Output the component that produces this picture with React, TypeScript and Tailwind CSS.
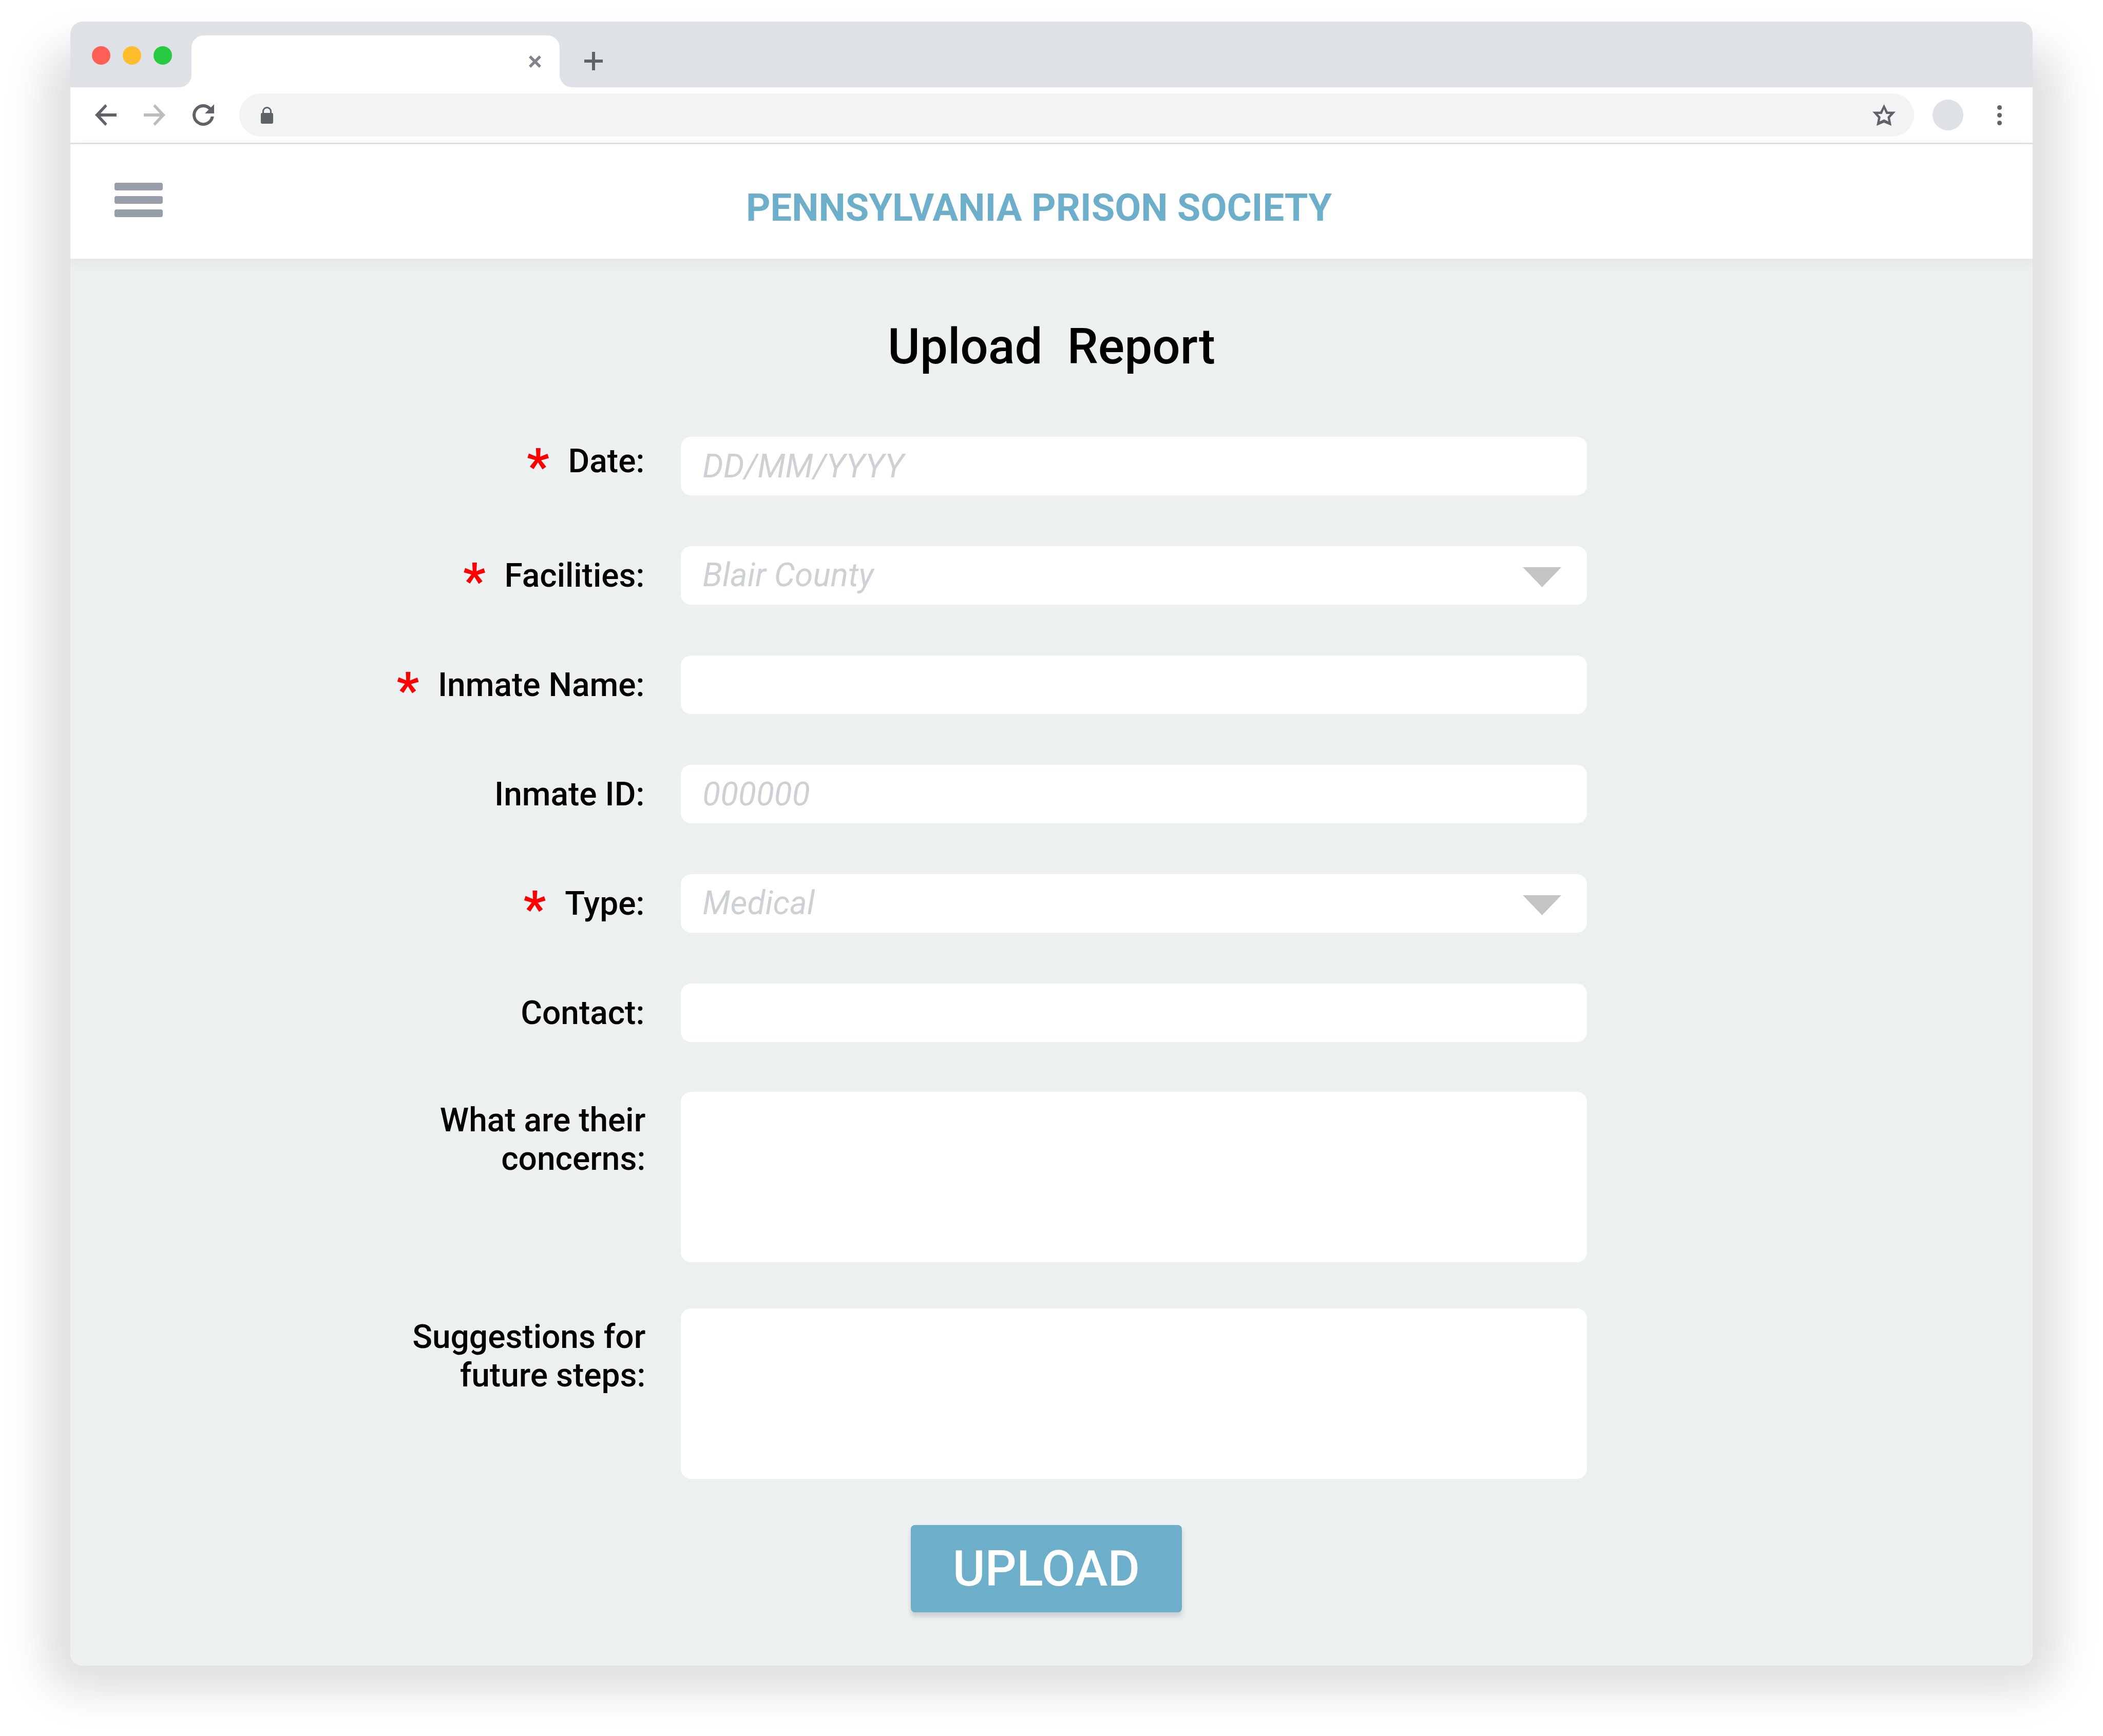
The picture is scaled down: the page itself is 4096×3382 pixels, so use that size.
import type { ReactNode } from "react";

const FIELD =
  "block w-full rounded-[20px] bg-white pl-[42px] pr-[40px] text-[64px] outline-none placeholder:italic placeholder:text-[#cdd0d4]";

function Row({
  id,
  label,
  required,
  multiline,
  labelClass = "self-center pr-[71px]",
  children,
}: {
  id: string;
  label: string;
  required?: boolean;
  multiline?: boolean;
  labelClass?: string;
  children: ReactNode;
}) {
  return (
    <div className="grid grid-cols-[1189fr_1764fr_868fr]">
      <label
        htmlFor={id}
        className={
          "flex items-center justify-end gap-[37px] text-right text-[64px] font-medium leading-[75px] text-black " +
          (multiline ? "self-start pr-[69px] pt-[18px]" : labelClass)
        }
      >
        {required && (
          <span aria-hidden="true" className="h-[75px] text-[96px] font-bold leading-[96px] text-[#ff0000]">
            *
          </span>
        )}
        <span className={multiline ? "max-w-[480px]" : ""}>{label}</span>
      </label>
      {children}
    </div>
  );
}

function TextField({ id, placeholder }: { id: string; placeholder?: string }) {
  return <input id={id} type="text" placeholder={placeholder} className={FIELD + " h-[114px] text-black"} />;
}

function SelectField({ id, value }: { id: string; value: string }) {
  return (
    <div className="relative">
      <select
        id={id}
        defaultValue={value}
        className={FIELD + " h-[114px] appearance-none italic text-[#cdd0d4]"}
      >
        <option>{value}</option>
      </select>
      <svg
        viewBox="0 0 75 39"
        className="pointer-events-none absolute right-[50px] top-[41px] h-[39px] w-[75px] fill-[#c4c4c4]"
        aria-hidden="true"
      >
        <path d="M0 0H75L37.5 39Z" />
      </svg>
    </div>
  );
}

function TextArea({ id }: { id: string }) {
  return <textarea id={id} className={FIELD + " h-[332px] resize-none py-[20px] text-black"} />;
}

function TabStrip() {
  return (
    <div className="flex items-start bg-[#dee1e6] pl-[42px]">
      <div className="mt-[48px] flex gap-[24px]">
        <button type="button" aria-label="Close window" className="size-[36px] rounded-full bg-[#ff5f57]" />
        <button type="button" aria-label="Minimize window" className="size-[36px] rounded-full bg-[#ffbd2e]" />
        <button type="button" aria-label="Zoom window" className="size-[36px] rounded-full bg-[#28ca42]" />
      </div>
      <div className="relative ml-[38px] mt-[27px] flex h-[101px] w-[717px] items-center justify-end rounded-t-[24px] bg-white pr-[36px]">
        <svg viewBox="0 0 24 24" className="absolute bottom-0 right-full size-[24px] fill-white" aria-hidden="true">
          <path d="M24 0A24 24 0 0 1 0 24H24Z" />
        </svg>
        <svg viewBox="0 0 24 24" className="absolute bottom-0 left-full size-[24px] fill-white" aria-hidden="true">
          <path d="M0 0A24 24 0 0 0 24 24H0Z" />
        </svg>
        <button type="button" aria-label="Close tab">
          <svg viewBox="0 0 24 24" className="size-[24px]" fill="none" stroke="#80848a" strokeWidth="5.4">
            <path d="M2 2L22 22M22 2L2 22" />
          </svg>
        </button>
      </div>
      <button type="button" aria-label="New tab" className="ml-[48px] mt-[59px]">
        <svg viewBox="0 0 36 36" className="size-[36px]" fill="none" stroke="#5f6368" strokeWidth="6">
          <path d="M18 0V36M0 18H36" />
        </svg>
      </button>
    </div>
  );
}

function Toolbar() {
  return (
    <div className="flex items-center border-b-[3px] border-[#dee1e6] bg-white py-[12px] pl-[48px] pr-[60px]">
      <div className="flex gap-[53px]">
        <button type="button" aria-label="Back">
          <svg viewBox="0 0 14 14" className="size-[42px] fill-[#5f6368]">
            <path d="M14 6H3.6L7.9 1.3L6.7 0L0 7L6.7 14L7.9 12.7L3.6 8H14Z" />
          </svg>
        </button>
        <button type="button" aria-label="Forward">
          <svg viewBox="0 0 14 14" className="size-[42px] fill-[#babcbe]">
            <path d="M0 6H10.4L6.1 1.3L7.3 0L14 7L7.3 14L6.1 12.7L10.4 8H0Z" />
          </svg>
        </button>
        <button type="button" aria-label="Reload">
          <svg viewBox="0 0 14 14" className="size-[42px] fill-[#5f6368]">
            <path d="M14 0V6H8L10.5 3.5A5 5 0 1 0 11.9 8H13.93A7 7 0 1 1 11.95 2.05Z" />
          </svg>
        </button>
      </div>
      <div className="ml-[49px] flex h-[84px] flex-1 items-center rounded-full bg-[#f1f3f4] pl-[42px] pr-[36px]">
        <svg viewBox="0 0 8 11" className="h-[33px] w-[24px]" aria-hidden="true">
          <rect y="4" width="8" height="7" rx="0.8" fill="#5f6368" />
          <path d="M1.5 4.5V3A2.5 2.5 0 0 1 6.5 3V4.5" fill="none" stroke="#5f6368" />
        </svg>
        <input
          type="text"
          aria-label="Address"
          className="mx-[24px] min-w-0 flex-1 bg-transparent text-[42px] text-[#5f6368] outline-none"
        />
        <button type="button" aria-label="Bookmark this page">
          <svg viewBox="0 0 45 42" className="h-[42px] w-[45px] fill-[#5f6368]" fillRule="evenodd">
            <path d="M22.5 0L29.6 14.6H45L34 26.4L37 42L22.5 36L8 42L11 26.4L0 14.6H15.4ZM22.5 9.6L26.7 19H34.6L29.2 25L31 33.6L22.5 29.6L14 33.6L15.8 25L10.4 19H18.3Z" />
          </svg>
        </button>
      </div>
      <button type="button" aria-label="Profile" className="ml-[36px] size-[60px] rounded-full bg-[#dee1e6]" />
      <button type="button" aria-label="Browser menu" className="ml-[66px] flex flex-col gap-[6px]">
        <span className="size-[9px] rounded-full bg-[#5f6368]" />
        <span className="size-[9px] rounded-full bg-[#5f6368]" />
        <span className="size-[9px] rounded-full bg-[#5f6368]" />
      </button>
    </div>
  );
}

function SiteHeader() {
  return (
    <header className="relative flex items-start bg-white pb-[50px] pl-[86px] pr-[229px] pt-[75px] shadow-[0_6px_24px_rgba(0,0,0,0.06)]">
      <button type="button" aria-label="Open menu" className="flex w-[94px] flex-col gap-[11px]">
        <span className="h-[15px] w-full rounded-[4px] bg-[#979da9]" />
        <span className="h-[15px] w-full rounded-[4px] bg-[#979da9]" />
        <span className="h-[15px] w-full rounded-[4px] bg-[#979da9]" />
      </button>
      <p className="flex-1 text-center text-[74px] font-bold leading-[98px] text-[#6dafca]">
        PENNSYLVANIA PRISON SOCIETY
      </p>
    </header>
  );
}

function ReportForm() {
  return (
    <main className="bg-[#ecf0f1] pb-[104px] pt-[115px]">
      <h1 className="whitespace-pre text-center text-[96px] font-medium leading-[112px] text-black">
        {"Upload  Report"}
      </h1>
      <form className="mt-[120px] flex flex-col gap-[97px]" onSubmit={(e) => e.preventDefault()}>
        <div className="flex flex-col gap-[99px]">
          <Row id="date" label="Date:" required labelClass="self-start pr-[71px] pt-[10px]">
            <TextField id="date" placeholder="DD/MM/YYYY" />
          </Row>
          <Row id="facility" label="Facilities:" required>
            <SelectField id="facility" value="Blair County" />
          </Row>
          <Row id="inmate-name" label="Inmate Name:" required>
            <TextField id="inmate-name" />
          </Row>
          <Row id="inmate-id" label="Inmate ID:">
            <TextField id="inmate-id" placeholder="000000" />
          </Row>
          <Row id="type" label="Type:" required>
            <SelectField id="type" value="Medical" />
          </Row>
          <Row id="contact" label="Contact:">
            <TextField id="contact" />
          </Row>
        </div>
        <div className="flex flex-col gap-[90px]">
          <Row id="concerns" label="What are their concerns:" multiline>
            <TextArea id="concerns" />
          </Row>
          <Row id="suggestions" label="Suggestions for future steps:" multiline>
            <TextArea id="suggestions" />
          </Row>
          <div className="flex justify-center pr-[20px]">
            <button
              type="submit"
              className="rounded-[8px] bg-[#6dafca] px-[82px] py-[29px] text-[96px] font-medium leading-[112px] text-white shadow-[0_8px_10px_rgba(0,0,0,0.14)]"
            >
              UPLOAD
            </button>
          </div>
        </div>
      </form>
    </main>
  );
}

export default function App() {
  return (
    <div className="min-h-screen bg-white px-[137px] pb-[137px] pt-[42px] font-['Roboto',sans-serif]">
      <div className="relative isolate">
        <div className="absolute inset-x-0 bottom-0 top-[96px] -z-10 rounded-[24px] shadow-[0_0_80px_50px_rgba(0,0,0,0.13)]" />
        <div className="overflow-hidden rounded-[24px]">
          <TabStrip />
          <Toolbar />
          <SiteHeader />
          <ReportForm />
        </div>
      </div>
    </div>
  );
}
